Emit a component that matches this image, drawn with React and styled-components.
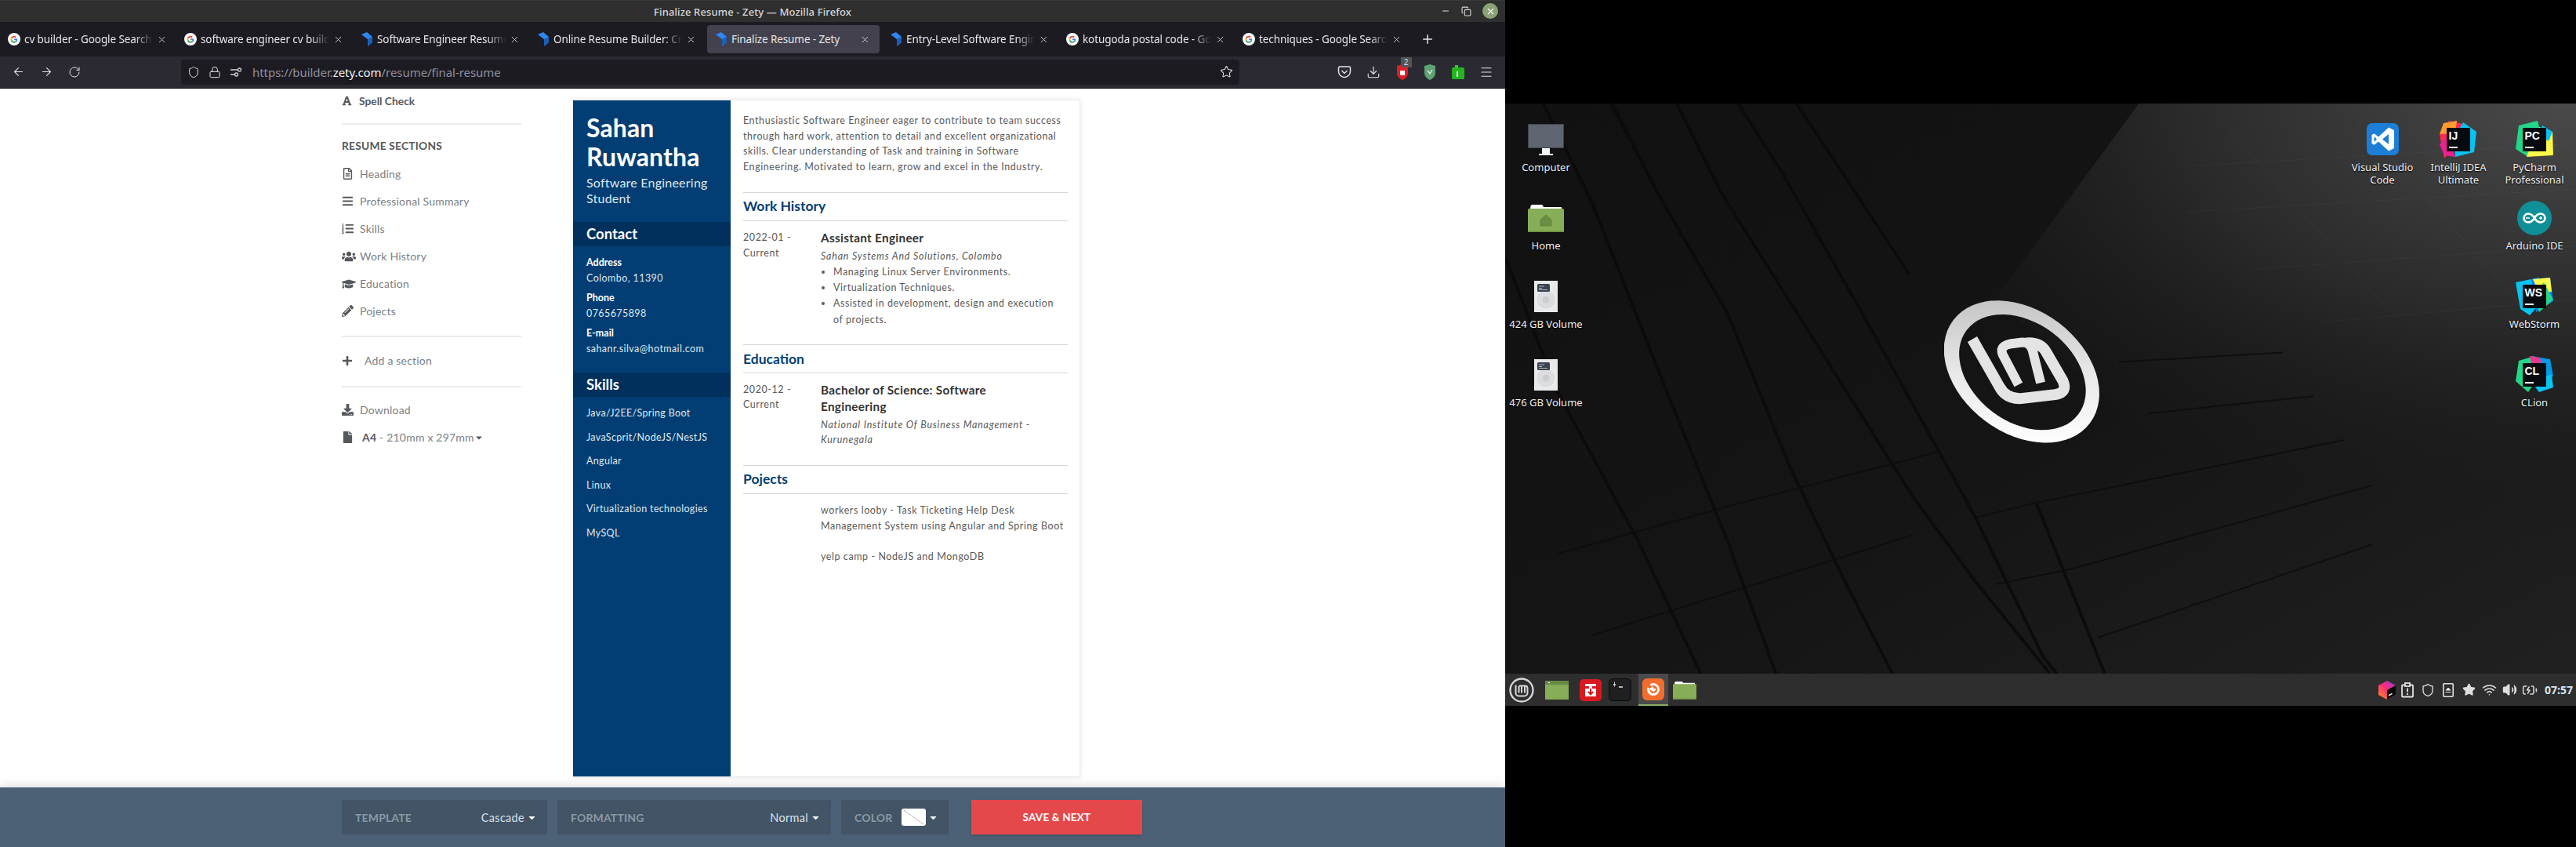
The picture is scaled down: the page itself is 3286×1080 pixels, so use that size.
import React from "react";
import styled, { createGlobalStyle } from "styled-components";
import { ArrowLeft, ArrowRight, RotateCw, Shield, Lock, Star, Download, Menu, Plus, X, Minus, Copy, Wifi, Volume2, BatteryCharging } from "lucide-react";
import { FaFont, FaRegFileAlt, FaBars, FaListOl, FaUsers, FaGraduationCap, FaPencilAlt, FaPlus, FaDownload, FaFile, FaCaretDown } from "react-icons/fa";

const Global = createGlobalStyle`
  html, body { margin: 0; padding: 0; background: #000; }
  * { box-sizing: border-box; }
`;
const CHROME = `"Noto Sans", "Open Sans", sans-serif`;
const RESUME = `Lato, "Open Sans", sans-serif`;

const Screen = styled.div`display:flex;width:3286px;height:1080px;overflow:hidden;background:#000;`;
const Browser = styled.div`display:flex;flex-direction:column;width:1920px;height:1080px;background:#fff;`;
const TitleBar = styled.div`position:relative;flex:0 0 28px;display:flex;align-items:center;justify-content:center;background:#2f2f2f;border-top:1px solid #3a3a3a;color:#d8d8d8;font:500 13px ${CHROME};letter-spacing:.12px;`;
const WinControls = styled.div`position:absolute;right:9px;top:3px;display:flex;align-items:center;gap:14px;color:#ddd;`;
const WinClose = styled.div`width:20px;height:20px;border-radius:50%;background:#8ba374;display:flex;align-items:center;justify-content:center;color:#fff;`;
const TabStrip = styled.div`flex:0 0 44px;display:flex;align-items:center;background:#1c1b22;`;
const TabBox = styled.div`flex:0 0 ${p=>p.$active?"220px":"225px"};min-width:0;height:36px;margin:0 ${p=>p.$active?"3px":"0"} 0 ${p=>p.$active?"2px":"0"};padding:0 12px 0 10px;display:flex;align-items:center;gap:5px;border-radius:4px;background:${p=>p.$active?"#42414d":"transparent"};color:#e6e6e8;`;
const TabLabel = styled.div`flex:1 1 0;min-width:0;white-space:nowrap;overflow:hidden;font:400 13.5px ${CHROME};letter-spacing:-.1px;-webkit-mask-image:${p=>p.$fade?"linear-gradient(90deg,#000 86%,transparent)":"none"};mask-image:${p=>p.$fade?"linear-gradient(90deg,#000 86%,transparent)":"none"};`;
const AddTab = styled.div`margin-left:12px;display:flex;color:#e8e8e8;`;
const Toolbar = styled.div`flex:0 0 41px;display:flex;align-items:center;background:#2b2a33;border-bottom:1px solid #0c0c0d;color:#e2e2e6;padding-bottom:1px;`;
const NavIcons = styled.div`flex:0 0 231px;display:flex;align-items:center;gap:19px;padding-left:15px;`;
const UrlBar = styled.div`flex:0 0 1350px;height:32px;display:flex;align-items:center;background:#1c1b22;border-radius:4px;padding:0 8px;gap:11px;`;
const UrlText = styled.div`flex:1;margin-left:2px;font:400 15px ${CHROME};color:#8f8f9d;white-space:nowrap;letter-spacing:-.05px;`;
const UrlHost = styled.span`color:#f0f0f4;`;
const ToolIcons = styled.div`flex:1;display:flex;align-items:center;justify-content:flex-end;gap:19.5px;padding-right:15px;`;
const BadgeWrap = styled.div`position:relative;display:flex;`;
const Badge = styled.div`position:absolute;left:6px;top:-9px;width:14px;height:13px;background:#555;color:#ddd;font:400 10px ${CHROME};text-align:center;line-height:13px;`;
const PageArea = styled.div`flex:1;min-height:0;display:flex;background:#fff;padding-left:436px;overflow:hidden;`;
const Rail = styled.div`flex:0 0 229px;display:flex;flex-direction:column;font-family:${RESUME};color:#7b7f85;font-size:14px;`;
const SpellRow = styled.div`flex:0 0 30px;display:flex;align-items:center;gap:9px;color:#55585c;font-weight:700;font-size:13.8px;margin-bottom:14px;`;
const RailRule = styled.div`flex:0 0 2px;background:#e9ebef;margin:${p=>p.$m||"0"};`;
const RailHeading = styled.div`height:20px;line-height:20px;margin:17px 0 8px;font-weight:700;font-size:13.8px;color:#55585c;letter-spacing:.2px;`;
const RailRow = styled.div`flex:0 0 35px;display:flex;align-items:center;gap:${p=>p.$gap||8}px;letter-spacing:.2px;margin:${p=>p.$m||"0"};`;
const RailIcon = styled.span`flex:0 0 ${p=>p.$w||15}px;display:flex;color:#55585c;`;
const RailStrong = styled.strong`font-weight:700;color:#55585c;`;
const RailCaret = styled.span`display:flex;margin-left:-11px;color:#55585c;`;
const Resume = styled.div`flex:0 0 647px;height:864px;margin:14px 0 0 66px;display:flex;background:#fff;border:1px solid #e8ebf0;border-left:0;box-shadow:0 0 6px rgba(40,50,70,.12);`;
const Side = styled.div`flex:0 0 201px;background:#023e73;color:#dfe8f1;font-family:${RESUME};padding-top:16px;`;
const Name = styled.div`padding-left:17px;font-weight:700;font-size:32px;line-height:37px;color:#fff;letter-spacing:.1px;`;
const Title = styled.div`padding-left:17px;margin-top:5px;font-size:16px;line-height:20px;letter-spacing:.22px;`;
const Band = styled.div`height:31px;margin-top:20px;padding-left:17px;background:#00305c;color:#fff;font-weight:700;font-size:18.5px;line-height:30px;`;
const ContactList = styled.div`padding:11px 0 0 17px;`;
const ContactLabel = styled.div`font-weight:700;font-size:12.5px;line-height:20px;color:#fff;margin-top:${p=>p.$first?0:5}px;`;
const ContactValue = styled.div`font-size:12.5px;line-height:20px;letter-spacing:.42px;`;
const SkillList = styled.div`padding:6px 0 0 17px;`;
const SkillItem = styled.div`height:30.6px;line-height:30px;font-size:12.5px;letter-spacing:.33px;white-space:nowrap;`;
const Main = styled.div`flex:1;padding:16px 15px 0 16px;font-family:${RESUME};font-size:12.5px;line-height:19.6px;color:#595959;letter-spacing:.57px;`;
const Summary = styled.div`white-space:nowrap;`;
const Section = styled.div`margin-top:${p=>p.$top}px;`;
const SectionHead = styled.div`height:37px;padding-top:${p=>p.$pad||0}px;border-top:1px solid #d5d6d9;border-bottom:1px solid #d5d6d9;line-height:33px;font-weight:700;font-size:17.5px;color:#023e73;letter-spacing:0;`;
const Entry = styled.div`display:grid;grid-template-columns:99px 1fr;padding-top:11px;white-space:nowrap;`;
const JobTitle = styled.div`font-weight:700;font-size:15.3px;line-height:${p=>p.$lh||20}px;color:#333;letter-spacing:.3px;`;
const Company = styled.div`font-style:italic;letter-spacing:.78px;margin-top:${p=>p.$m}px;`;
const Bullets = styled.ul`margin:0;padding:0 0 0 16px;`;
const BulletItem = styled.li`line-height:20.2px;`;
const Blank = styled.div`height:19.6px;`;
const BottomBar = styled.div`position:relative;flex:0 0 76px;display:flex;align-items:center;gap:13px;padding-left:436px;background:#4d6176;box-shadow:0 -3px 12px rgba(0,0,0,.12);font-family:${RESUME};`;
const Picker = styled.div`flex:0 0 ${p=>p.$w}px;height:44px;display:flex;align-items:center;justify-content:space-between;padding:0 13px 0 17px;background:#425465;`;
const PickerLabel = styled.div`font-weight:700;font-size:14px;color:#8a99a5;letter-spacing:.15px;`;
const PickerValue = styled.div`display:flex;align-items:center;gap:3px;color:#d9e2e9;font-size:14.5px;letter-spacing:.3px;`;
const Swatch = styled.svg`display:block;width:31px;height:22px;`;
const SaveButton = styled.div`flex:0 0 218px;height:44px;margin-left:16px;display:flex;align-items:center;justify-content:center;background:#e5484b;color:#fff;font-weight:700;font-size:13.5px;letter-spacing:.2px;box-shadow:0 2px 4px rgba(0,0,0,.15);`;

const DesktopCol = styled.div`flex:0 0 1366px;display:flex;flex-direction:column;background:#000;`;
const TopBlack = styled.div`flex:0 0 132px;background:#000;`;
const Wallpaper = styled.div`position:relative;flex:0 0 727px;overflow:hidden;background:#141414;`;
const WallArt = styled.svg`position:absolute;inset:0;width:100%;height:100%;`;
const WallLogo = styled.svg`position:absolute;left:560px;top:251px;width:198px;height:182px;`;
const DeskItem = styled.div`position:absolute;left:${p=>p.$cx-60}px;top:${p=>p.$top}px;width:120px;display:flex;flex-direction:column;align-items:center;`;
const DeskArt = styled.div`height:${p=>p.$h}px;display:flex;align-items:flex-end;justify-content:center;`;
const DeskLabel = styled.div`margin-top:${p=>p.$m}px;text-align:center;font:400 13px/16px ${CHROME};color:#eceff2;text-shadow:0 1px 2px #000;white-space:nowrap;`;
const Panel = styled.div`flex:0 0 41px;display:flex;align-items:stretch;background:#2e2e2e;`;
const PanelLeft = styled.div`display:flex;align-items:center;padding-left:5px;`;
const Launcher = styled.div`flex:0 0 ${p=>p.$w}px;height:41px;display:flex;align-items:center;justify-content:center;background:${p=>p.$on?"#4a4a4a":"transparent"};border-bottom:${p=>p.$on?"2px solid #8aad5e":"0"};`;
const Tray = styled.div`margin-left:auto;display:flex;align-items:center;padding-right:4px;color:#dedede;`;
const TraySlot = styled.div`flex:0 0 26px;display:flex;align-items:center;justify-content:center;`;
const Clock = styled.div`margin-left:6px;font:700 14px ${CHROME};color:#d5e4f3;`;
const BottomBlack = styled.div`flex:1;background:#000;`;
const JbFrame = styled.svg`display:block;`;

const GoogleG = () => (
  <svg width="16" height="16" viewBox="0 0 48 48"><circle cx="24" cy="24" r="24" fill="#fff"/>
    <path fill="#EA4335" d="M24 11c3.4 0 6.3 1.2 8.6 3.4l-4 4c-1.2-1.1-2.7-1.7-4.6-1.7-3.5 0-6.5 2.4-7.6 5.6l-4.7-3.6C13.9 14.2 18.6 11 24 11z"/>
    <path fill="#4285F4" d="M37 24.4c0-1-.1-1.9-.3-2.8H24v5.3h7.3c-.3 1.7-1.3 3.2-2.7 4.1l4.4 3.4c2.5-2.4 4-5.8 4-10z"/>
    <path fill="#FBBC05" d="M16.4 26.8c-.3-.8-.4-1.8-.4-2.8s.1-1.9.4-2.7l-4.7-3.6C10.6 19.6 10 21.7 10 24s.6 4.4 1.7 6.4z"/>
    <path fill="#34A853" d="M24 38c3.7 0 6.8-1.2 9-3.3l-4.4-3.4c-1.2.8-2.8 1.3-4.6 1.3-3.5 0-6.5-2.4-7.6-5.6l-4.7 3.6C14 35 18.6 38 24 38z"/>
  </svg>
);
const ZetyIcon = () => (
  <svg width="16" height="18" viewBox="0 0 16 18"><path fill="#2f86f0" d="M1 3 L8 0 L15 6 L15 13 L9 18 L9 9 Z"/><path fill="#1a5fb8" d="M9 9 L15 6 L15 13 L9 18 Z"/></svg>
);
const PermIcon = () => (
  <svg width="16" height="16" viewBox="0 0 16 16" fill="none" stroke="#cfcfd8" strokeWidth="1.3"><path d="M1 5h9M1 11h5"/><circle cx="12.5" cy="5" r="2"/><circle cx="8.5" cy="11" r="2"/></svg>
);
const PocketIcon = () => (
  <svg width="18" height="18" viewBox="0 0 18 18" fill="none" stroke="#e2e2e6" strokeWidth="1.5"><path d="M3 2h12a1.5 1.5 0 0 1 1.5 1.5V8a7.5 7.5 0 0 1-15 0V3.5A1.5 1.5 0 0 1 3 2z"/><path d="M5.5 7 9 10.5 12.5 7"/></svg>
);
const RedShield = () => (
  <svg width="16" height="20" viewBox="0 0 16 20"><path fill="#e01e25" d="M8 0 15 2v9c0 5-4 7.5-7 9-3-1.5-7-4-7-9V2z"/><rect x="5" y="8" width="6" height="6" fill="#fff"/></svg>
);
const GreenShield = () => (
  <svg width="16" height="20" viewBox="0 0 16 20"><path fill="#5fa272" d="M8 0 15 2v9c0 5-4 7.5-7 9-3-1.5-7-4-7-9V2z"/><path d="M5 8l3 4 3-5" stroke="#dff0e4" strokeWidth="1.4" fill="none"/></svg>
);
const GreenExt = () => (
  <svg width="16" height="18" viewBox="0 0 16 18"><rect x="0" y="3" width="16" height="15" rx="1.5" fill="#25b31f"/><rect x="4" y="0" width="4" height="4" fill="#36c830"/><rect x="6" y="8" width="2" height="7" fill="#d6f5d2"/></svg>
);
const MintLm = ({ size, stroke }) => (
  <svg width={size} height={size} viewBox="0 0 32 32" fill="none" stroke={stroke} strokeWidth="2.4">
    <circle cx="16" cy="16" r="14.5"/>
    <path d="M8.5 9.5v10a4 4 0 0 0 4 4h7a4 4 0 0 0 4-4v-6a3 3 0 0 0-3-3h-6a2.5 2.5 0 0 0-2 1v8M16 11v8.5M20 11v8.5" strokeWidth="2"/>
  </svg>
);
const FolderSvg = ({ w, h, home }) => (
  <svg width={w} height={h} viewBox="0 0 46 36">
    <path fill="#fff" d="M3 6 3.5 2.5Q4 1 6 1H17q2 0 2.5 2l.5 1H43v4H3z"/>
    <rect x="0" y="6" width="46" height="30" rx="1.5" fill="#86ad57"/>
    <rect x="0" y="34.5" width="46" height="1.5" fill="#6c9040"/>
    {home && <path d="M23 14l7 6v8H16v-8z" fill="#6a8f44" stroke="#5a7b38" strokeWidth=".6"/>}
  </svg>
);
const Disk = () => (
  <svg width="30" height="40" viewBox="0 0 30 40">
    <rect width="30" height="40" fill="#e8e9eb"/>
    <circle cx="15" cy="24" r="12.5" fill="#dcdde0" stroke="#f4f4f5" strokeWidth="1"/>
    <circle cx="15" cy="24" r="4.5" fill="#cdced2"/>
    <rect x="4" y="4" width="16" height="10" rx="1.5" fill="#3b4350"/>
    <path d="M6 7h7M6 9.5h4M6 11.5h11" stroke="#cfd3d8" strokeWidth=".8"/>
  </svg>
);
const Monitor = () => (
  <svg width="46" height="40" viewBox="0 0 46 40">
    <rect x="0.5" y="0.5" width="45" height="30" fill="#5e6570" stroke="#3d434e"/>
    <rect x="18" y="31" width="10" height="7" fill="#f4f4f4"/>
    <rect x="14" y="38" width="18" height="2" fill="#f4f4f4"/>
  </svg>
);
const VsCode = () => (
  <svg width="41" height="41" viewBox="0 0 41 41">
    <rect width="41" height="41" rx="7" fill="#1c7ed6"/>
    <path fill="#fff" d="M28 5.5l7 3.5v23l-7 3.5-13-12-5.5 4.3-3-1.8v-11l3-1.8L15 17.5zM28 14l-8 6.5 8 6.5zM9.5 17v7l3.5-3.5z"/>
  </svg>
);
const Jet = ({ label, shapes }) => (
  <JbFrame width="48" height="48" viewBox="0 0 48 48">
    {shapes.map((s, i) => <polygon key={i} points={s[0]} fill={s[1]} />)}
    <rect x="9" y="9" width="30" height="30" fill="#070b10"/>
    <text x="11.5" y="24" fontFamily="Liberation Sans, sans-serif" fontWeight="700" fontSize="14" fill="#fff">{label}</text>
    <rect x="12" y="33" width="11" height="2" fill="#fff"/>
  </JbFrame>
);
const IJ = [["12,0 30,4 26,26 6,48 0,18", "#fe2857"], ["5,3 22,0 20,16 0,17", "#ff9a2e"], ["30,2 47,14 44,40 20,46 18,22", "#07c3f2"], ["0,30 10,20 20,46 6,44", "#ee1f93"]];
const PC = [["4,6 28,0 32,16 16,46 0,36", "#21d789"], ["30,8 47,14 48,44 14,46 22,24", "#fcf84a"], ["34,6 47,14 42,26 30,18", "#07c3f2"]];
const WS = [["0,6 30,0 36,28 18,48 6,40", "#07c3f2"], ["20,2 44,0 48,30 26,44", "#087cfa"], ["22,2 44,0 46,18 30,20", "#fcf84a"], ["36,6 48,28 30,44 24,22", "#21d789"]];
const CL = [["4,6 24,0 30,26 16,46 0,32", "#21d789"], ["20,0 44,4 48,26 30,30", "#009ae5"], ["18,0 30,2 34,8 20,10", "#ed358c"], ["18,30 46,24 48,40 30,46", "#07c3f2"]];
const Arduino = () => (
  <svg width="44" height="44" viewBox="0 0 44 44" fill="none">
    <circle cx="22" cy="22" r="22" fill="#0f8f97"/>
    <path d="M22 22c-2-3.5-4.5-5.5-8-5.5a5.5 5.5 0 0 0 0 11c3.5 0 6-2 8-5.5zm0 0c2-3.5 4.5-5.5 8-5.5a5.5 5.5 0 0 1 0 11c-3.5 0-6-2-8-5.5z" stroke="#fff" strokeWidth="2.6"/>
    <path d="M11 22h5M28 22h4M30 20v4" stroke="#fff" strokeWidth="1.5"/>
  </svg>
);
const RedApp = () => (
  <svg width="28" height="28" viewBox="0 0 28 28"><rect width="28" height="28" rx="5" fill="#d81a20"/>
    <path d="M7 6h14v3h-5v3h5v10H7V12h5V9H7z" fill="#fff"/><path d="M14 12v7M11 16l3 3.5 3-3.5" stroke="#d81a20" strokeWidth="2" fill="none"/></svg>
);
const Term = () => (
  <svg width="29" height="29" viewBox="0 0 29 29"><rect x=".5" y=".5" width="28" height="28" rx="5" fill="#1f1f1f" stroke="#0a0a0a"/>
    <path d="M6 8h3M13 11h5" stroke="#e8e8e8" strokeWidth="1.3"/><path d="M7.5 4.5v6" stroke="#e8e8e8" strokeWidth=".8"/></svg>
);
const FfApp = () => (
  <svg width="28" height="28" viewBox="0 0 28 28"><rect width="28" height="28" rx="6" fill="#f26d2e"/>
    <path d="M14 6a8 8 0 1 1-7.6 5.5l3 1.5A5 5 0 1 0 14 9c-1 0-2 .3-2.8 .8L9.5 7.5A8 8 0 0 1 14 6z" fill="#fff"/><path d="M9 13l5-3v3l4 0-3 4-3-1z" fill="#fff"/></svg>
);
const Toolbox = () => (
  <svg width="22" height="24" viewBox="0 0 22 24"><defs><linearGradient id="tb" x1="0" y1="1" x2="1" y2="0"><stop offset="0" stopColor="#ff9419"/><stop offset=".5" stopColor="#ff2d78"/><stop offset="1" stopColor="#8f3bd8"/></linearGradient></defs>
    <polygon points="11,0 22,6 22,18 11,24 0,18 0,6" fill="url(#tb)"/><polygon points="11,12 22,6 22,18 11,24" fill="#0a0a0a"/><rect x="13" y="17" width="5" height="1.5" fill="#fff" transform="rotate(-28 15 18)"/></svg>
);
const TrayAlert = () => (
  <svg width="16" height="20" viewBox="0 0 16 20" fill="none" stroke="#e2e2e2" strokeWidth="1.8"><rect x="1" y="3.5" width="14" height="15" rx="1"/><rect x="5" y="1" width="6" height="4" fill="#2e2e2e"/><path d="M8 7.5v5M8 14v2"/></svg>
);
const TrayEject = () => (
  <svg width="14" height="18" viewBox="0 0 14 18" fill="none" stroke="#e2e2e2" strokeWidth="1.6"><rect x=".8" y=".8" width="12.4" height="16.4" rx="1"/><path d="M7 6l3 3H4zM3.5 11.5h7" fill="#e2e2e2" strokeWidth="1"/></svg>
);

const TABS = [
  ["g", "cv builder - Google Search", true],
  ["g", "software engineer cv builder - Google Search", true],
  ["z", "Software Engineer Resume Examples & Guide", true],
  ["z", "Online Resume Builder: Create a Perfect Resume", true],
  ["z", "Finalize Resume - Zety", false, true],
  ["z", "Entry-Level Software Engineer Resume Samples", true],
  ["g", "kotugoda postal code - Google Search", true],
  ["g", "techniques - Google Search", true],
];
const SECTIONS = [
  [<FaRegFileAlt size={15} />, "Heading"],
  [<FaBars size={15} />, "Professional Summary"],
  [<FaListOl size={15} />, "Skills"],
  [<FaUsers size={18} />, "Work History", 1],
  [<FaGraduationCap size={18} />, "Education", 1],
  [<FaPencilAlt size={15} />, "Pojects"],
];
const SKILLS = ["Java/J2EE/Spring Boot", "JavaScprit/NodeJS/NestJS", "Angular", "Linux", "Virtualization technologies", "MySQL"];
const V = ["M160 45L230 290L330 600L420 1000L500 1300L570 1545","M255 45L320 280L460 680L600 1080L690 1300L800 1545","M345 45L410 230L530 610L690 1130L790 1500L810 1545","M430 45L595 495","M60 45L130 300L240 800L330 1200L400 1545","M5 450L80 800L200 1200L290 1545","M780 1095L880 1545"];
const H = ["M80 1230L340 1100L640 960","M130 1445L600 1180","M690 1135L780 1095L1230 930","M720 1310L830 1270L1270 1050","M870 1450L1270 1205","M945 860L1185 815","M900 725L1140 700"];
const GRID = ["M1000 210L1568 150","M1000 330L1568 270","M1100 480L1568 420","M1200 620L1568 560","M1050 90L1300 600","M1250 90L1500 600"];

export default function App() {
  return (
    <Screen>
      <Global />
      <Browser>
        <TitleBar>
          Finalize Resume - Zety — Mozilla Firefox
          <WinControls>
            <Minus size={12} />
            <Copy size={13} />
            <WinClose><X size={13} /></WinClose>
          </WinControls>
        </TitleBar>
        <TabStrip>
          {TABS.map(([ic, t, fade, active]) => (
            <TabBox key={t} $active={active}>
              {ic === "g" ? <GoogleG /> : <ZetyIcon />}
              <TabLabel $fade={fade}>{t}</TabLabel>
              <X size={13} strokeWidth={1.5} />
            </TabBox>
          ))}
          <AddTab><Plus size={18} /></AddTab>
        </TabStrip>
        <Toolbar>
          <NavIcons>
            <ArrowLeft size={17} strokeWidth={1.5} />
            <ArrowRight size={17} strokeWidth={1.5} />
            <RotateCw size={16} strokeWidth={1.5} />
          </NavIcons>
          <UrlBar>
            <Shield size={16} strokeWidth={1.5} />
            <Lock size={16} strokeWidth={1.5} />
            <PermIcon />
            <UrlText>https://builder.<UrlHost>zety.com</UrlHost>/resume/final-resume</UrlText>
            <Star size={17} strokeWidth={1.5} />
          </UrlBar>
          <ToolIcons>
            <PocketIcon />
            <Download size={18} strokeWidth={1.5} />
            <BadgeWrap><RedShield /><Badge>2</Badge></BadgeWrap>
            <GreenShield />
            <GreenExt />
            <Menu size={18} strokeWidth={1.5} />
          </ToolIcons>
        </Toolbar>
        <PageArea>
          <Rail>
            <SpellRow><RailIcon $w={13}><FaFont size={13} /></RailIcon>Spell Check</SpellRow>
            <RailRule />
            <RailHeading>RESUME SECTIONS</RailHeading>
            {SECTIONS.map(([ic, t, wide]) => (
              <RailRow key={t} $gap={wide ? 4 : 8}>
                <RailIcon $w={wide ? 19 : 15}>{ic}</RailIcon>{t}
              </RailRow>
            ))}
            <RailRule $m="14px 0 0" />
            <RailRow $gap={15} $m="12px 0 0"><RailIcon $w={14}><FaPlus size={14} /></RailIcon>Add a section</RailRow>
            <RailRule $m="15px 0 0" />
            <RailRow $m="11px 0 0"><RailIcon $w={15}><FaDownload size={15} /></RailIcon>Download</RailRow>
            <RailRow $gap={11}>
              <RailIcon $w={12}><FaFile size={15} /></RailIcon>
              <span><RailStrong>A4</RailStrong> - 210mm x 297mm</span><RailCaret><FaCaretDown size={12} /></RailCaret>
            </RailRow>
          </Rail>
          <Resume>
            <Side>
              <Name>Sahan<br />Ruwantha</Name>
              <Title>Software Engineering<br />Student</Title>
              <Band>Contact</Band>
              <ContactList>
                <ContactLabel $first>Address</ContactLabel>
                <ContactValue>Colombo, 11390</ContactValue>
                <ContactLabel>Phone</ContactLabel>
                <ContactValue>0765675898</ContactValue>
                <ContactLabel>E-mail</ContactLabel>
                <ContactValue>sahanr.silva@hotmail.com</ContactValue>
              </ContactList>
              <Band>Skills</Band>
              <SkillList>{SKILLS.map(s => <SkillItem key={s}>{s}</SkillItem>)}</SkillList>
            </Side>
            <Main>
              <Summary>
                Enthusiastic Software Engineer eager to contribute to team success<br />
                through hard work, attention to detail and excellent organizational<br />
                skills. Clear understanding of Task and training in Software<br />
                Engineering. Motivated to learn, grow and excel in the Industry.
              </Summary>
              <Section $top={23}>
                <SectionHead>Work History</SectionHead>
                <Entry>
                  <div>2022-01 -<br />Current</div>
                  <div>
                    <JobTitle>Assistant Engineer</JobTitle>
                    <Company $m={4}>Sahan Systems And Solutions, Colombo</Company>
                    <Bullets>
                      <BulletItem>Managing Linux Server Environments.</BulletItem>
                      <BulletItem>Virtualization Techniques.</BulletItem>
                      <BulletItem>Assisted in development, design and execution<br />of projects.</BulletItem>
                    </Bullets>
                  </div>
                </Entry>
              </Section>
              <Section $top={21}>
                <SectionHead $pad={1}>Education</SectionHead>
                <Entry>
                  <div>2020-12 -<br />Current</div>
                  <div>
                    <JobTitle $lh={21}>Bachelor of Science: Software<br />Engineering</JobTitle>
                    <Company $m={3}>National Institute Of Business Management -<br />Kurunegala</Company>
                  </div>
                </Entry>
              </Section>
              <Section $top={22}>
                <SectionHead>Pojects</SectionHead>
                <Entry>
                  <div />
                  <div>
                    workers looby - Task Ticketing Help Desk<br />
                    Management System using Angular and Spring Boot
                    <Blank />
                    yelp camp - NodeJS and MongoDB
                  </div>
                </Entry>
              </Section>
            </Main>
          </Resume>
        </PageArea>
        <BottomBar>
          <Picker $w={262}><PickerLabel>TEMPLATE</PickerLabel><PickerValue>Cascade<FaCaretDown size={13} color="#fff" /></PickerValue></Picker>
          <Picker $w={349}><PickerLabel>FORMATTING</PickerLabel><PickerValue>Normal<FaCaretDown size={13} color="#fff" /></PickerValue></Picker>
          <Picker $w={137}>
            <PickerLabel>COLOR</PickerLabel>
            <PickerValue>
              <Swatch viewBox="0 0 31 22"><rect width="31" height="22" rx="3" fill="#fff"/><path d="M3 2 28 20" stroke="#8c97a3" strokeWidth="1" strokeDasharray="2 1"/></Swatch>
              <FaCaretDown size={13} color="#fff" />
            </PickerValue>
          </Picker>
          <SaveButton>SAVE &amp; NEXT</SaveButton>
        </BottomBar>
      </Browser>
      <DesktopCol>
        <TopBlack />
        <Wallpaper>
          <WallArt viewBox="4.6 45 1563.4 1500" preserveAspectRatio="none">
            <defs>
              <linearGradient id="base" x1="0" y1="0" x2="1" y2="1">
                <stop offset="0" stopColor="#111111" />
                <stop offset=".55" stopColor="#151515" />
                <stop offset="1" stopColor="#212121" />
              </linearGradient>
              <radialGradient id="glow" gradientUnits="userSpaceOnUse" cx="1568" cy="45" r="1150">
                <stop offset="0" stopColor="#4a4a4a" />
                <stop offset=".5" stopColor="#2a2a2a" />
                <stop offset="1" stopColor="#181818" stopOpacity="0" />
              </radialGradient>
            </defs>
            <rect x="0" y="0" width="1600" height="1600" fill="url(#base)" />
            <polygon points="930,45 1568,45 1568,1250 1000,1000 720,560" fill="url(#glow)" />
            <g fill="none" stroke="#ffffff" strokeOpacity=".035" strokeWidth="1">
              {GRID.map(d => <path key={d} d={d} vectorEffect="non-scaling-stroke" />)}
            </g>
            <g fill="none" stroke="#0a0a0a" strokeOpacity=".85" strokeWidth="4">
              {V.map(d => <path key={d} d={d} vectorEffect="non-scaling-stroke" />)}
            </g>
            <g fill="none" stroke="#0d0d0d" strokeOpacity=".85" strokeWidth="2">
              {H.map(d => <path key={d} d={d} vectorEffect="non-scaling-stroke" />)}
            </g>
          </WallArt>
          <WallLogo viewBox="360 130 595 545">
            <defs>
              <linearGradient id="lg" gradientUnits="userSpaceOnUse" x1="420" y1="150" x2="800" y2="660">
                <stop offset="0" stopColor="#bcbcbc" />
                <stop offset=".55" stopColor="#e8e8e8" />
                <stop offset="1" stopColor="#ffffff" />
              </linearGradient>
            </defs>
            <g transform="rotate(37 657 402)">
              <path fillRule="evenodd" fill="url(#lg)" d="M329 402a328 235 0 1 0 656 0a328 235 0 1 0 -656 0zM393 402a268 190 0 1 1 536 0a268 190 0 1 1 -536 0z" />
            </g>
            <g fill="none" stroke="#e4e4e4" strokeLinejoin="round">
              <path strokeWidth="42" d="M468 278L572 460Q598 508 655 505L785 490Q835 483 815 437L750 325Q726 288 675 293" />
              <path strokeWidth="36" d="M645 452L585 338Q570 305 612 296L660 290Q688 290 698 318L730 445" />
            </g>
          </WallLogo>
          <DeskItem $cx={52} $top={26}><DeskArt $h={40}><Monitor /></DeskArt><DeskLabel $m={7}>Computer</DeskLabel></DeskItem>
          <DeskItem $cx={52} $top={124}><DeskArt $h={40}><FolderSvg w={46} h={36} home /></DeskArt><DeskLabel $m={9}>Home</DeskLabel></DeskItem>
          <DeskItem $cx={52} $top={226}><DeskArt $h={40}><Disk /></DeskArt><DeskLabel $m={7}>424 GB Volume</DeskLabel></DeskItem>
          <DeskItem $cx={52} $top={326}><DeskArt $h={40}><Disk /></DeskArt><DeskLabel $m={7}>476 GB Volume</DeskLabel></DeskItem>
          <DeskItem $cx={1119} $top={26}><DeskArt $h={40}><VsCode /></DeskArt><DeskLabel $m={7}>Visual Studio<br />Code</DeskLabel></DeskItem>
          <DeskItem $cx={1216} $top={22}><DeskArt $h={48}><Jet label="IJ" shapes={IJ} /></DeskArt><DeskLabel $m={3}>IntelliJ IDEA<br />Ultimate</DeskLabel></DeskItem>
          <DeskItem $cx={1313} $top={22}><DeskArt $h={48}><Jet label="PC" shapes={PC} /></DeskArt><DeskLabel $m={3}>PyCharm<br />Professional</DeskLabel></DeskItem>
          <DeskItem $cx={1313} $top={124}><DeskArt $h={44}><Arduino /></DeskArt><DeskLabel $m={5}>Arduino IDE</DeskLabel></DeskItem>
          <DeskItem $cx={1313} $top={222}><DeskArt $h={48}><Jet label="WS" shapes={WS} /></DeskArt><DeskLabel $m={3}>WebStorm</DeskLabel></DeskItem>
          <DeskItem $cx={1313} $top={322}><DeskArt $h={48}><Jet label="CL" shapes={CL} /></DeskArt><DeskLabel $m={3}>CLion</DeskLabel></DeskItem>
        </Wallpaper>
        <Panel>
          <PanelLeft>
            <Launcher $w={32}><MintLm size={32} stroke="#d6d6d6" /></Launcher>
            <Launcher $w={58}><svg width="30" height="24" viewBox="0 0 30 24"><rect width="30" height="24" fill="#86ad57"/><rect width="30" height="5" fill="#668a45"/><rect x="4" y="2" width="2" height="1" fill="#fff"/></svg></Launcher>
            <Launcher $w={28}><RedApp /></Launcher>
            <Launcher $w={47}><Term /></Launcher>
            <Launcher $w={38} $on><FfApp /></Launcher>
            <Launcher $w={42}><FolderSvg w={30} h={24} /></Launcher>
          </PanelLeft>
          <Tray>
            <TraySlot><Toolbox /></TraySlot>
            <TraySlot><TrayAlert /></TraySlot>
            <TraySlot><Shield size={18} strokeWidth={1.8} /></TraySlot>
            <TraySlot><TrayEject /></TraySlot>
            <TraySlot><Star size={17} fill="#dedede" /></TraySlot>
            <TraySlot><Wifi size={19} strokeWidth={2} /></TraySlot>
            <TraySlot><Volume2 size={19} fill="#dedede" /></TraySlot>
            <TraySlot><BatteryCharging size={20} strokeWidth={1.8} /></TraySlot>
            <Clock>07:57</Clock>
          </Tray>
        </Panel>
        <BottomBlack />
      </DesktopCol>
    </Screen>
  );
}
